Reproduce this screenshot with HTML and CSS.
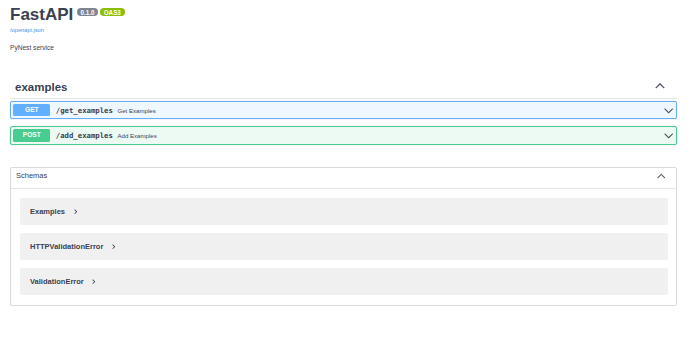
FILE: index.html
```html
<!DOCTYPE html>
<html lang="en">
<head>
<meta charset="utf-8">
<title>FastAPI - Swagger UI</title>
<link rel="stylesheet" href="styles.css">
</head>
<body>
<div class="page">
  <div class="info">
    <h2 class="title">FastAPI<span class="badge version">0.1.0</span><span class="badge oas">OAS3</span></h2>
    <a class="link" href="#">/openapi.json</a>
    <p class="desc">PyNest service</p>
  </div>

  <section class="tag">
    <h3 class="tag-header">
      <span>examples</span>
      <svg class="chev tag-arrow" viewBox="0 0 20 20"><path transform="rotate(180 10 10)" d="M17.418 6.109c.272-.268.709-.268.979 0s.271.701 0 .969l-7.908 7.83c-.27.268-.707.268-.979 0l-7.908-7.83c-.27-.268-.27-.701 0-.969.271-.268.709-.268.979 0L10 13.25l7.418-7.141z"/></svg>
    </h3>
    <div class="ops">
      <div class="op op-get">
        <span class="method">GET</span>
        <span class="path">/get_examples</span>
        <span class="summary">Get Examples</span>
        <svg class="chev op-arrow" viewBox="0 0 20 20"><path d="M17.418 6.109c.272-.268.709-.268.979 0s.271.701 0 .969l-7.908 7.83c-.27.268-.707.268-.979 0l-7.908-7.83c-.27-.268-.27-.701 0-.969.271-.268.709-.268.979 0L10 13.25l7.418-7.141z"/></svg>
      </div>
      <div class="op op-post">
        <span class="method">POST</span>
        <span class="path">/add_examples</span>
        <span class="summary">Add Examples</span>
        <svg class="chev op-arrow" viewBox="0 0 20 20"><path d="M17.418 6.109c.272-.268.709-.268.979 0s.271.701 0 .969l-7.908 7.83c-.27.268-.707.268-.979 0l-7.908-7.83c-.27-.268-.27-.701 0-.969.271-.268.709-.268.979 0L10 13.25l7.418-7.141z"/></svg>
      </div>
    </div>
  </section>

  <section class="models">
    <h4 class="models-header">
      <span>Schemas</span>
      <svg class="chev models-arrow" viewBox="0 0 20 20"><path transform="rotate(180 10 10)" d="M17.418 6.109c.272-.268.709-.268.979 0s.271.701 0 .969l-7.908 7.83c-.27.268-.707.268-.979 0l-7.908-7.83c-.27-.268-.27-.701 0-.969.271-.268.709-.268.979 0L10 13.25l7.418-7.141z"/></svg>
    </h4>
    <div class="models-list">
      <div class="model"><span>Examples</span><svg class="model-arrow" viewBox="0 0 24 24"><path d="M10 6 8.59 7.41 13.17 12l-4.58 4.59L10 18l6-6z"/></svg></div>
      <div class="model"><span>HTTPValidationError</span><svg class="model-arrow" viewBox="0 0 24 24"><path d="M10 6 8.59 7.41 13.17 12l-4.58 4.59L10 18l6-6z"/></svg></div>
      <div class="model"><span>ValidationError</span><svg class="model-arrow" viewBox="0 0 24 24"><path d="M10 6 8.59 7.41 13.17 12l-4.58 4.59L10 18l6-6z"/></svg></div>
    </div>
  </section>
</div>
</body>
</html>
```
FILE: styles.css
```css
* { box-sizing: border-box; }

body {
  margin: 0;
  background: #fff;
  color: #3b4151;
  font-family: "Liberation Sans", Arial, sans-serif;
}

.page {
  padding: 5px 23px 0 10px;
}

.title {
  display: flex;
  align-items: flex-start;
  margin: 0;
  font-size: 17px;
  line-height: 20px;
  font-weight: 700;
  color: #3b4151;
}

.badge {
  margin-top: 3px;
  padding: 0.5px 3.8px;
  border-radius: 4px;
  font-size: 6.3px;
  line-height: 7px;
  font-weight: 700;
  color: #fff;
}

.version {
  margin-left: 3.5px;
  background: #7d8492;
}

.oas {
  margin-left: 1.5px;
  background: #89bf04;
}

.link {
  display: block;
  margin-top: 2px;
  font-size: 5.7px;
  line-height: 7px;
  color: #4990e2;
  text-decoration: none;
}

.desc {
  margin: 10.3px 0 0;
  font-size: 6.6px;
  line-height: 8px;
}

.tag-header {
  display: flex;
  align-items: center;
  justify-content: space-between;
  margin: 23.7px 0 0;
  padding: 5px 12px 4px 5px;
  border-bottom: 1px solid #e2e3e6;
  font-size: 11.5px;
  line-height: 13px;
  font-weight: 700;
}

.chev {
  fill: #3b4151;
  stroke: #3b4151;
  stroke-width: 0.9;
}

.tag-arrow {
  width: 10px;
  height: 10px;
  margin-bottom: 3px;
}

.ops {
  display: flex;
  flex-direction: column;
  gap: 7px;
  margin-top: 2px;
}

.op {
  display: flex;
  align-items: center;
  padding: 2px 2.3px;
  border: 1px solid;
  border-radius: 2px;
  box-shadow: 0 0 1.5px rgba(0, 0, 0, 0.19);
}

.op-get {
  border-color: #61affe;
  background: #eff7ff;
}

.op-post {
  border-color: #49cc90;
  background: #edfaf4;
}

.method {
  min-width: 37px;
  height: 12.5px;
  line-height: 12.5px;
  text-align: center;
  font-size: 6.6px;
  font-weight: 700;
  color: #fff;
  border-radius: 1.5px;
}

.op-get .method { background: #61affe; }
.op-post .method { background: #49cc90; }

.path {
  padding: 0 4.5px 0 5.5px;
  font-family: "DejaVu Sans Mono", "Liberation Mono", monospace;
  font-size: 7.3px;
  font-weight: 700;
  color: #3b4151;
}

.summary {
  flex: 1;
  font-size: 6.1px;
  color: #3b4151;
}

.op-arrow {
  width: 9.4px;
  height: 9.4px;
}

.models {
  margin-top: 21.8px;
  border: 1px solid #d9dadd;
  border-radius: 2px;
}

.models-header {
  display: flex;
  align-items: center;
  justify-content: space-between;
  margin: 0;
  padding: 3px 10.5px 7px 5px;
  border-bottom: 1px solid #e6e6e6;
  font-size: 7.5px;
  line-height: 10px;
  font-weight: 400;
  color: #3b4151;
}

.models-arrow {
  width: 8.5px;
  height: 8.5px;
}

.models-list {
  display: flex;
  flex-direction: column;
  gap: 8px;
  padding: 9px 8px 10px 9px;
}

.model {
  display: flex;
  align-items: center;
  height: 27px;
  padding-left: 10px;
  background: #f0f0f0;
  border-radius: 2px;
  font-size: 7.5px;
  font-weight: 700;
  color: #3b4151;
}

.model-arrow {
  width: 9.4px;
  height: 9.4px;
  margin: 1px 0 0 5.5px;
  fill: #3b4151;
}
```
